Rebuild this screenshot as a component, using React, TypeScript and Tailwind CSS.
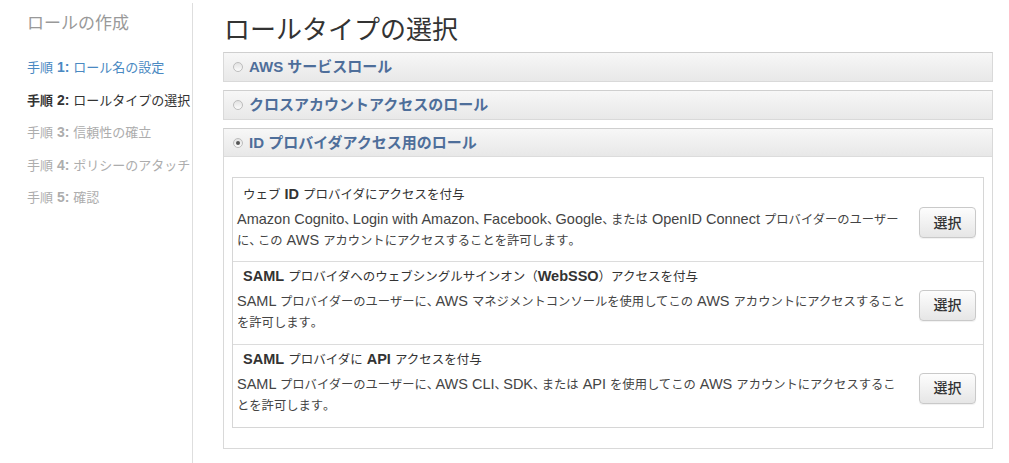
import React from "react";

const FONT = { fontFamily: '"Liberation Sans", "Noto Sans CJK JP", sans-serif' };

function Mix({ text, lat, cjk }: { text: string; lat: string; cjk: string }) {
  const parts = text.match(/[\x20-\x7E]+|[、。]+|[^\x20-\x7E、。]+/g) || [];
  return (
    <>
      {parts.map((p, i) => {
        if (/^[\x20-\x7E]/.test(p)) {
          return (
            <span key={i} className={`${lat} leading-none`}>
              {p}
            </span>
          );
        }
        if (/^[、。]/.test(p)) {
          return (
            <span key={i} className={`${cjk} leading-none mr-[2.5px] [font-feature-settings:'halt']`}>
              {p}
            </span>
          );
        }
        return (
          <span key={i} className={`${cjk} leading-none`}>
            {p}
          </span>
        );
      })}
    </>
  );
}

function Radio({ checked }: { checked?: boolean }) {
  return (
    <span className="inline-flex items-center justify-center w-[10px] h-[10px] rounded-full border border-[#bdbdbd] bg-gradient-to-b from-[#e2e2e2] to-[#fbfbfb] mr-[6px] shrink-0">
      {checked ? <span className="w-[4px] h-[4px] rounded-full bg-[#555]" /> : null}
    </span>
  );
}

function PanelHeader({ text, checked, last }: { text: string; checked?: boolean; last?: boolean }) {
  return (
    <div
      className={`flex items-center h-[28px] pl-[9px] bg-gradient-to-b from-[#f7f7f7] to-[#e8e8e8] font-bold text-[#4e6e9a] ${
        last ? "border-b border-[#dcdcdc]" : ""
      }`}
    >
      <Radio checked={checked} />
      <span className="leading-none whitespace-nowrap">
        <Mix text={text} lat="text-[15px]" cjk="text-[15px]" />
      </span>
    </div>
  );
}

function SelectButton() {
  return (
    <button className="self-center w-[57px] h-[31px] shrink-0 rounded-[4px] border border-[#c9c9c9] bg-gradient-to-b from-[#fdfdfd] to-[#e6e6e6] text-[14px] leading-none text-[#333] font-medium shadow-[0_1px_1px_rgba(0,0,0,0.06)]">
      選択
    </button>
  );
}

type Seg = { t: string; b?: boolean };

function Row({ title, lines, first }: { title: Seg[]; lines: string[]; first?: boolean }) {
  return (
    <div
      className={`flex h-[83px] pl-[4px] pr-[7px] ${first ? "pt-[6px]" : "pt-[4px] border-t border-[#dcdcdc]"}`}
    >
      <div className="flex-1 min-w-0 self-start">
        <div className="pl-[6px] leading-[20px] text-[#333] whitespace-nowrap">
          {title.map((s, i) =>
            s.b ? (
              <b key={i}>
                <Mix text={s.t} lat="text-[14.5px]" cjk="text-[12.5px]" />
              </b>
            ) : (
              <Mix key={i} text={s.t} lat="text-[14.5px]" cjk="text-[12.5px]" />
            )
          )}
        </div>
        <div className="mt-[4px] leading-[21px] text-[#444]">
          {lines.map((l, i) => (
            <div key={i} className="whitespace-nowrap">
              <Mix text={l} lat="text-[14.5px]" cjk="text-[12.3px]" />
            </div>
          ))}
        </div>
      </div>
      <SelectButton />
    </div>
  );
}

function Step({ n, label, cls, current }: { n: string; label: string; cls: string; current?: boolean }) {
  return (
    <div className={`h-[32.5px] flex items-center whitespace-nowrap ${cls}`}>
      <span className="leading-none">
        <span className={`text-[13px] ${current ? "font-bold" : ""}`}>手順</span>
        <b className="text-[14px]"> {n}: </b>
        <span className="text-[13px]">{label}</span>
      </span>
    </div>
  );
}

export default function App() {
  return (
    <div className="flex w-[1009px] h-[463px] bg-white overflow-hidden" style={FONT}>
      {/* Sidebar */}
      <div className="w-[193px] shrink-0 mt-[3px] border-r border-[#dedede] pl-[27px] pt-[9px]">
        <div className="text-[17px] leading-[24px] text-[#999]">ロールの作成</div>
        <div className="mt-[15px]">
          <Step n="1" label="ロール名の設定" cls="text-[#4a89c2]" />
          <Step n="2" label="ロールタイプの選択" cls="text-[#333]" current />
          <Step n="3" label="信頼性の確立" cls="text-[#adadad]" />
          <Step n="4" label="ポリシーのアタッチ" cls="text-[#adadad]" />
          <Step n="5" label="確認" cls="text-[#adadad]" />
        </div>
      </div>

      {/* Main */}
      <div className="flex-1 min-w-0 pl-[30px] pr-[16px] pt-[14px]">
        <h1 className="text-[26px] leading-[32px] text-[#333] pl-[1px] whitespace-nowrap">ロールタイプの選択</h1>
        <div className="mt-[6px] flex flex-col gap-[8px]">
          <div className="border border-[#d9d9d9] border-t-[#cfcfcf]">
            <PanelHeader text="AWS サービスロール" />
          </div>
          <div className="border border-[#d9d9d9] border-t-[#cfcfcf]">
            <PanelHeader text="クロスアカウントアクセスのロール" />
          </div>
          <div className="border border-[#d9d9d9] border-t-[#cfcfcf] bg-white">
            <PanelHeader text="ID プロバイダアクセス用のロール" checked last />
            <div className="px-[8px] pt-[20px] pb-[20px]">
              <div className="border border-[#d6d6d6]">
                <Row
                  first
                  title={[{ t: "ウェブ " }, { t: "ID", b: true }, { t: " プロバイダにアクセスを付与" }]}
                  lines={[
                    "Amazon Cognito、Login with Amazon、Facebook、Google、または OpenID Connect プロバイダーのユーザー",
                    "に、この AWS アカウントにアクセスすることを許可します。",
                  ]}
                />
                <Row
                  title={[
                    { t: "SAML", b: true },
                    { t: " プロバイダへのウェブシングルサインオン（" },
                    { t: "WebSSO", b: true },
                    { t: "）アクセスを付与" },
                  ]}
                  lines={[
                    "SAML プロバイダーのユーザーに、AWS マネジメントコンソールを使用してこの AWS アカウントにアクセスすること",
                    "を許可します。",
                  ]}
                />
                <Row
                  title={[
                    { t: "SAML", b: true },
                    { t: " プロバイダに " },
                    { t: "API", b: true },
                    { t: " アクセスを付与" },
                  ]}
                  lines={[
                    "SAML プロバイダーのユーザーに、AWS CLI、SDK、または API を使用してこの AWS アカウントにアクセスするこ",
                    "とを許可します。",
                  ]}
                />
              </div>
            </div>
          </div>
        </div>
      </div>
    </div>
  );
}
